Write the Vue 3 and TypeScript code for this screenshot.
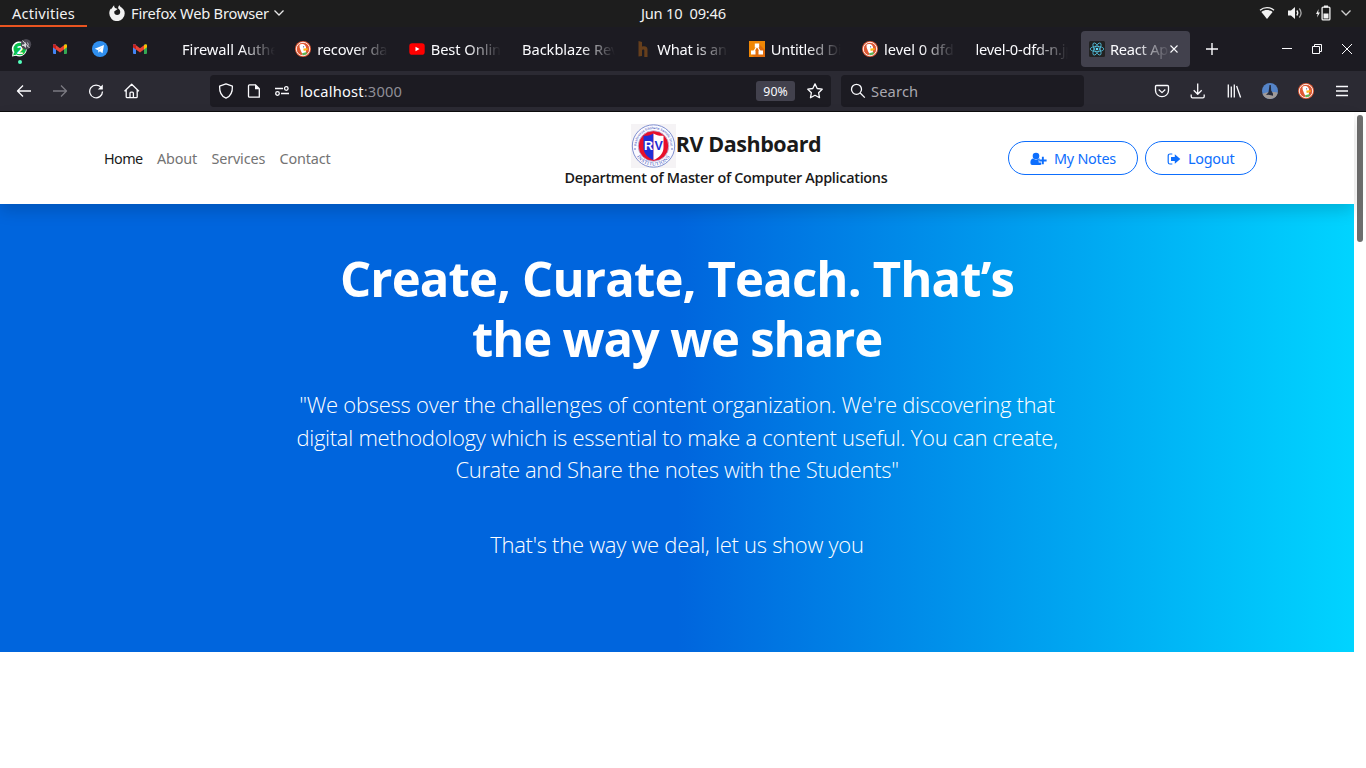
<script setup lang="ts">
interface Tab {
  title: string
  icon: 'duck' | 'youtube' | 'h' | 'draw' | 'react' | null
  tight?: boolean
  active?: boolean
}

const tabs: Tab[] = [
  { title: 'Firewall Authe', icon: null },
  { title: 'recover data', icon: 'duck', tight: true },
  { title: 'Best Online', icon: 'youtube' },
  { title: 'Backblaze Rev', icon: null },
  { title: 'What is and', icon: 'h', tight: true },
  { title: 'Untitled Dia', icon: 'draw', tight: true },
  { title: 'level 0 dfd', icon: 'duck' },
  { title: 'level-0-dfd-n.jp', icon: null, tight: true },
  { title: 'React App', icon: 'react', active: true },
]
const links: string[] = ['Home', 'About', 'Services', 'Contact']
</script>

<template>
  <div class="desktop">
    <svg class="defs" width="0" height="0">
      <symbol id="duck" viewBox="0 0 16 16">
        <circle cx="8" cy="8" r="8" fill="#de5833" />
        <circle cx="8" cy="8" r="6.700" fill="none" stroke="#fff" stroke-width=".9" />
        <path d="M4.500 3.800C6 2.600 8.800 2.700 10.200 4.400c1 1.300 1 2.700.6 4.100L11 13.600l-3.200.5C6.700 11.300 5.300 8.700 4.700 6.700z" fill="#fff" />
        <path d="M8.300 7.400l4.500-.2-.3 1.900-3.800.9z" fill="#fdb515" />
        <path d="M7 12.300l4.800-1.400-.3 2.500-3.600.9z" fill="#5ab552" />
        <circle cx="8.600" cy="5.800" r=".6" fill="#2d4f8e" />
      </symbol>
      <symbol id="gmail" viewBox="0 0 16 12">
        <path d="M1 1.500h3V11H2a1 1 0 0 1-1-1z" fill="#4285f4" />
        <path d="M12 1.500h3V10a1 1 0 0 1-1 1h-2z" fill="#34a853" />
        <path d="M12 2.200l1-.8a1.300 1.300 0 0 1 2 1.200V4.300L12 6.600z" fill="#fbbc04" />
        <path d="M1 4.300V2.600a1.300 1.300 0 0 1 2-1.200L8 5.200l4-3v4.400L8 9.500z" fill="#ea4335" />
        <path d="M1 4.300V2.600a1.300 1.300 0 0 1 2-1.200l1 .8v4.400z" fill="#c5221f" />
      </symbol>
    </svg>

    <header class="topbar">
      <div class="activities">Activities</div>
      <div class="app-menu">
        <svg width="16" height="16" viewBox="0 0 16 16">
          <path d="M5.200.3c-.2 1.200 0 2 .9 2.700 1 .2 1.800.5 2.500 1L7 5.300c-.5.3-1.200.4-1.600 1-.6 2.200.8 3.800 2.700 3.800 2 0 3.300-1.500 3.100-3.400-.1-1.600-1.100-2.500-2-3.100C9 2.300 9.400 1 10.500 0c.1 1.100.7 1.600 1.700 2.300 2 1.400 3.500 3.200 3.500 6A7.700 7.700 0 0 1 .3 8.500C.2 6.200 1 4.400 2.200 3.200l.3 1C3.300 2.600 4 1.200 5.200.3z" fill="#f2f2f2" />
        </svg>
        <span>Firefox Web Browser</span>
        <svg width="12" height="8" viewBox="0 0 12 8"><path d="M1.500 1.500L6 6l4.500-4.500" fill="none" stroke="#e8e8e8" stroke-width="1.300" /></svg>
      </div>
      <div class="clock">Jun 10&nbsp; 09:46</div>
      <div class="status">
        <svg width="16" height="14" viewBox="0 0 16 14">
          <path d="M1 4.200C5 .8 11 .8 15 4.200" fill="none" stroke="#f2f2f2" stroke-width="1.300" />
          <path d="M2.400 6C5.600 3.400 10.400 3.400 13.600 6L8 13z" fill="#f2f2f2" />
        </svg>
        <svg width="16" height="14" viewBox="0 0 16 14">
          <path d="M1 4.500h3L8 1v12L4 9.500H1z" fill="#f2f2f2" />
          <path d="M9.800 4.500q2 2.500 0 5" fill="none" stroke="#f2f2f2" stroke-width="1.300" />
          <path d="M12.300 2.500q3.600 4.500 0 9" fill="none" stroke="#a8a8a8" stroke-width="1.300" />
        </svg>
        <svg width="16" height="16" viewBox="0 0 16 16">
          <path d="M3.600 4L1 9h1.700L2 12.500 5 7.500H3.200z" fill="#f2f2f2" />
          <path d="M9 .5h4v2H9z" fill="#f2f2f2" />
          <rect x="7.100" y="2.100" width="7.800" height="12.800" rx="1" fill="none" stroke="#f2f2f2" stroke-width="1.300" />
          <path d="M8.500 8.500h5v5h-5z" fill="#f2f2f2" />
        </svg>
        <svg width="12" height="8" viewBox="0 0 12 8"><path d="M1.500 1.500L6 6l4.500-4.500" fill="none" stroke="#d0d0d0" stroke-width="1.300" /></svg>
      </div>
    </header>

    <div class="tabstrip">
      <div class="pinned">
        <div class="pin">
          <svg width="24" height="30" viewBox="0 0 24 30">
            <path d="M4 20.500L4.700 16.500A7.500 7.500 0 1 1 8 19.700z" fill="#fff" />
            <circle cx="11.800" cy="13" r="6.300" fill="#09c04a" />
            <path d="M5.200 19.400l.9-3.500 2.600 2.600z" fill="#09c04a" />
            <text x="12" y="17.500" text-anchor="middle" class="wa-count">2</text>
            <circle cx="18" cy="8.200" r="5.200" fill="#4b4953" />
            <path d="M14 8.500h1.800L18 6v6l-2.200-2H14z" fill="#d8d8dc" />
            <path d="M19.500 6.500q1.500 1.700 0 4M14.500 4.500l7 7.500" fill="none" stroke="#d8d8dc" stroke-width=".9" />
            <circle cx="12" cy="26" r="2" fill="#54ffbd" />
          </svg>
        </div>
        <div class="pin"><svg width="16" height="12"><use href="#gmail" /></svg></div>
        <div class="pin">
          <svg width="16" height="16" viewBox="0 0 16 16">
            <circle cx="8" cy="8" r="8" fill="#2f8fef" />
            <path d="M2.800 7.800l9.200-3.700-1.500 8.100-2.700-1.900-1.300 1.400-.4-2.500z" fill="#fff" />
            <path d="M6.200 9l4-3.300-3.300 3.900z" fill="#9cc9f5" />
          </svg>
        </div>
        <div class="pin"><svg width="16" height="12"><use href="#gmail" /></svg></div>
      </div>

      <div v-for="tab in tabs" :key="tab.title" class="tab" :class="{ active: tab.active }">
        <svg v-if="tab.icon === 'duck'" class="fav" width="16" height="16"><use href="#duck" /></svg>
        <svg v-else-if="tab.icon === 'youtube'" class="fav" width="16" height="16" viewBox="0 0 16 16">
          <rect x=".3" y="2.300" width="15.400" height="11.400" rx="2.800" fill="#f00" />
          <path d="M6.500 5.700v4.600L10.500 8z" fill="#fff" />
        </svg>
        <svg v-else-if="tab.icon === 'h'" class="fav" width="16" height="16" viewBox="0 0 16 16">
          <path d="M3.500 0L7 1v4.600c2.800-1 5.500-.2 5.500 2.600V16H9.300V9.500c0-1.600-2.300-1.300-2.300.3V15l-3.500.6z" fill="#663f1c" />
        </svg>
        <svg v-else-if="tab.icon === 'draw'" class="fav" width="16" height="16" viewBox="0 0 16 16">
          <path d="M0 0h16v16H0z" fill="#f08705" />
          <path d="M10 3l6 6v7H5l-3-3 5-5z" fill="#df6c0c" />
          <path d="M8 5L4.500 11M8 5l3.500 6" stroke="#fff" stroke-width="1.300" />
          <path d="M5.800 2.500h4.400v4H5.800zM2 9.500h4.500v4H2zM9.500 9.500H14v4H9.500z" fill="#fff" />
        </svg>
        <svg v-else-if="tab.icon === 'react'" class="fav" width="16" height="16" viewBox="0 0 16 16">
          <rect width="16" height="16" rx="1.500" fill="#222" />
          <g fill="none" stroke="#53c1de" stroke-width=".8">
            <ellipse cx="8" cy="8" rx="6.800" ry="2.600" />
            <ellipse cx="8" cy="8" rx="6.800" ry="2.600" transform="rotate(60 8 8)" />
            <ellipse cx="8" cy="8" rx="6.800" ry="2.600" transform="rotate(120 8 8)" />
          </g>
          <circle cx="8" cy="8" r="1.300" fill="#61dafb" />
        </svg>
        <span class="tab-title" :class="{ tight: tab.tight }">{{ tab.title }}</span>
        <svg v-if="tab.active" class="tab-close" width="8" height="8" viewBox="0 0 8 8"><path d="M.5.5l7 7M7.500.5l-7 7" stroke="#fbfbfe" stroke-width="1.100" /></svg>
      </div>

      <svg class="new-tab" width="12" height="12" viewBox="0 0 12 12"><path d="M6 0v12M0 6h12" stroke="#fbfbfe" stroke-width="1.400" /></svg>
      <div class="win-controls">
        <svg width="12" height="12" viewBox="0 0 12 12"><path d="M1 5.500h10" stroke="#fbfbfe" /></svg>
        <svg width="12" height="12" viewBox="0 0 12 12"><path d="M1.500 3.500h7v7h-7zM3.500 3.500v-2h7v7h-2" fill="none" stroke="#fbfbfe" /></svg>
        <svg width="12" height="12" viewBox="0 0 12 12"><path d="M1 1l10 10M11 1L1 11" stroke="#fbfbfe" /></svg>
      </div>
    </div>

    <div class="navbar">
      <div class="nav-buttons">
        <svg width="16" height="16" viewBox="0 0 16 16"><path d="M7 2.500L1.500 8 7 13.500M1.500 8H15" /></svg>
        <svg class="dim" width="16" height="16" viewBox="0 0 16 16"><path d="M9 2.500L14.500 8 9 13.500M14.500 8H1" /></svg>
        <svg width="16" height="16" viewBox="0 0 16 16"><path d="M13.300 4.700A6.400 6.400 0 1 0 14.500 8.500" /><path class="solid" d="M14.800 1.500v5H9.800z" /></svg>
        <svg width="16" height="16" viewBox="0 0 16 16"><path d="M.5 8.300L7.700 1.300l7.200 7M2.200 7v6.700a1 1 0 0 0 1 1h9a1 1 0 0 0 1-1V7M6 14.500V10.200a1 1 0 0 1 1-1h1.400a1 1 0 0 1 1 1v4.300" /></svg>
      </div>

      <div class="urlbar">
        <svg width="16" height="16" viewBox="0 0 16 16"><path d="M8 .9l6.400 2.300c.2 5.500-1.500 10-6.400 12C3.100 13.200 1.400 8.700 1.600 3.200z" /></svg>
        <svg width="16" height="16" viewBox="0 0 16 16"><path d="M3.500 1.800h5.800l4 4v8.400H3.500a1 1 0 0 1-1-1V2.800a1 1 0 0 1 1-1z" /><path class="solid" d="M9 1.500v4.700h4.500z" /></svg>
        <svg width="16" height="16" viewBox="0 0 16 16"><path d="M1 5.500h8M7 10.500h8" /><circle cx="12.300" cy="5.500" r="1.800" /><circle cx="3.500" cy="10.500" r="1.800" /></svg>
        <span class="address">localhost<span class="port">:3000</span></span>
        <span class="zoom">90%</span>
        <svg width="16" height="16" viewBox="0 0 16 16"><path d="M8 .9l2.200 4.600 5 .7-3.600 3.500.9 5L8 12.300l-4.500 2.400.9-5L.8 6.200l5-.7z" /></svg>
      </div>

      <div class="searchbar">
        <svg width="16" height="16" viewBox="0 0 16 16"><circle cx="6.500" cy="6.300" r="5" /><path d="M10.200 10l4.600 4.600" /></svg>
        <span>Search</span>
      </div>

      <div class="extensions">
        <svg width="16" height="16" viewBox="0 0 16 16"><path d="M2.500 2.500h11a1 1 0 0 1 1 1V7.500a6.500 6.200 0 0 1-13 0V3.500a1 1 0 0 1 1-1zM4.700 6.500L8 9.600l3.300-3.100" /></svg>
        <svg width="16" height="16" viewBox="0 0 16 16"><path d="M7.700.5v10.500M3.700 7.200l4 4 4-4M1.200 11.500v2a1.300 1.300 0 0 0 1.300 1.300h10.400a1.300 1.300 0 0 0 1.300-1.300v-2" /></svg>
        <svg width="16" height="16" viewBox="0 0 16 16"><path d="M2.300 1.500v13M5.300 3.500v11M8.300 1.500v13M10.600 3l4 11.500" /></svg>
        <svg class="pic" width="16" height="16" viewBox="0 0 16 16">
          <circle cx="8" cy="8" r="8" fill="#5584c8" />
          <path d="M.5 10.800l4-1.300 7-.5 4.300.5A8 8 0 0 1 .5 10.800z" fill="#a09a98" />
          <path d="M7.500 2h1.300l.4 5.500 1.800 3.200v2l-4.500-1-2.500.3 2.500-2.700z" fill="#252b3c" />
        </svg>
        <svg class="pic" width="16" height="16"><use href="#duck" /></svg>
        <svg width="16" height="16" viewBox="0 0 16 16"><path d="M2 3.500h12M2 8h12M2 12.500h12" /></svg>
      </div>
    </div>

    <main class="viewport">
      <div class="page">
        <nav class="site-header">
          <ul class="links">
            <li v-for="(link, i) in links" :key="link" :class="{ current: i === 0 }">{{ link }}</li>
          </ul>
          <div class="brand">
            <div class="brand-row">
              <svg width="45" height="44" viewBox="0 0 45 44">
                <path d="M0 0h45v44H0z" fill="#f5f3f5" />
                <circle cx="22.500" cy="22" r="21.200" fill="#fafaff" stroke="#7f8fd0" stroke-width="1" />
                <circle cx="22.500" cy="22" r="15.300" fill="#e8102a" stroke="#b9c2e6" stroke-width=".8" />
                <path d="M22.500 9.500c-3 2-6.500 2.500-10 2.200v11.800c0 6 4.500 10.500 10 12.500z" fill="#1f2fd6" />
                <path d="M22.500 9.500c3 2 6.500 2.500 10 2.200v11.800c0 6-4.500 10.500-10 12.500z" fill="#fff" />
                <text x="17.500" y="26" class="crest left">R</text>
                <text x="27.700" y="26" class="crest right">V</text>
                <path id="arc-top" d="M5.500 22a17 17 0 0 1 34 0" fill="none" />
                <path id="arc-bottom" d="M2.900 22a19.600 19.600 0 0 0 39.200 0" fill="none" />
                <text class="ring-small"><textPath href="#arc-top" startOffset="50%">Rashtreeya Sikshana Samithi Trust</textPath></text>
                <text class="ring-large"><textPath href="#arc-bottom" startOffset="50%">INSTITUTIONS</textPath></text>
                <circle cx="4" cy="25" r=".7" fill="#3648b4" />
                <circle cx="41" cy="25" r=".7" fill="#3648b4" />
              </svg>
              <span class="brand-name">RV Dashboard</span>
            </div>
            <div class="department">Department of Master of Computer Applications</div>
          </div>
          <div class="actions">
            <button class="pill notes" type="button">
              <svg width="17" height="14" viewBox="0 0 17 14">
                <circle cx="6" cy="4" r="3.300" />
                <path d="M.4 10.500C.4 8.200 1.500 6.800 3.200 6.600c1.700 1.400 3.900 1.400 5.600 0 .8.100 1.300.4 1.300.9H8.700v3h2.600v2c-.3.300-.7.500-1.300.5H2.200C1.100 13 .4 12.200.4 10.500z" />
                <path d="M11.900 4.800h1.900v2.800h2.800v1.900h-2.800v2.800h-1.900V9.500H9.200V7.600h2.700z" />
              </svg>
              <span>My Notes</span>
            </button>
            <button class="pill logout" type="button">
              <svg width="14" height="14" viewBox="0 0 14 14">
                <path d="M5.300 2H3A1.800 1.800 0 0 0 1.200 3.800v6.400A1.800 1.800 0 0 0 3 12h2.300" fill="none" stroke="#0d6efd" stroke-width="1.200" />
                <path d="M7.800 2.300L13.300 7l-5.500 4.700V9H4V5h3.800z" />
              </svg>
              <span>Logout</span>
            </button>
          </div>
        </nav>

        <section class="hero">
          <h1>
            <span>Create, Curate, Teach. That’s</span>
            <span class="h-second">the way we share</span>
          </h1>
          <p class="lead">
            <span>"We obsess over the challenges of content organization. We're discovering that</span>
            <span>digital methodology which is essential to make a content useful. You can create,</span>
            <span class="l-third">Curate and Share the notes with the Students"</span>
          </p>
          <p class="closing">That's the way we deal, let us show you</p>
        </section>
      </div>
      <div class="scrollbar"><div class="thumb"></div></div>
    </main>
  </div>
</template>

<style>
body {
  margin: 0;
  background: #fff;
}
</style>

<style scoped>
.desktop {
  width: 1366px;
  height: 768px;
  overflow: hidden;
  display: flex;
  flex-direction: column;
  background: #fff;
  font-family: 'Noto Sans', 'Open Sans', sans-serif;
  font-size: 14.67px;
  line-height: 20px;
  white-space: nowrap;
}
.defs {
  position: absolute;
}
svg {
  display: block;
  flex: none;
}

.topbar {
  height: 27px;
  flex: none;
  display: grid;
  grid-template-columns: 87px 554px 86px 1fr;
  align-items: center;
  background: #1d1d1d;
  color: #f2f2f2;
}
.activities {
  box-sizing: border-box;
  height: 27px;
  padding: 3px 0 0 12px;
  border-bottom: 2px solid #e95420;
  letter-spacing: 0.2px;
}
.app-menu {
  display: flex;
  align-items: center;
  height: 26px;
  margin-bottom: 1px;
  padding-left: 22px;
  letter-spacing: -0.2px;
}
.app-menu span {
  margin: 0 4px 0 6px;
}
.clock {
  margin-bottom: 1px;
  letter-spacing: -0.23px;
}
.status {
  display: flex;
  align-items: center;
  justify-content: flex-end;
  gap: 12px;
  padding-right: 14px;
  margin-bottom: 1px;
}
.status svg:last-child {
  margin-left: -3px;
}

.tabstrip {
  height: 44px;
  flex: none;
  display: flex;
  align-items: center;
  background: #1c1b22;
  color: #fbfbfe;
}
.pinned {
  width: 174.3px;
  flex: none;
  display: flex;
}
.pin {
  width: 40px;
  height: 44px;
  display: flex;
  align-items: center;
  justify-content: center;
}
.pin:first-child {
  align-items: flex-start;
  padding-top: 9px;
  height: 35px;
}
.wa-count {
  font: 700 11px 'Noto Sans', sans-serif;
  fill: #fff;
}
.tab {
  box-sizing: border-box;
  width: 113.35px;
  height: 36px;
  flex: none;
  display: flex;
  align-items: center;
  padding: 0 13px 0 7.7px;
}
.fav {
  margin-right: 6px;
}
.tab-title {
  flex: 1;
  min-width: 0;
  overflow: hidden;
  padding-bottom: 1px;
  letter-spacing: -0.06px;
  mask-image: linear-gradient(to left, transparent, #000 34px);
}
.tab-title.tight {
  letter-spacing: -0.25px;
}
.tab.active {
  width: 109px;
  margin-left: -0.1px;
  padding: 0 12px 0 8px;
  border-radius: 4px;
  background: #42414d;
}
.tab.active .fav {
  margin-right: 5px;
}
.tab.active .tab-title {
  letter-spacing: -0.25px;
}
.new-tab {
  margin-left: 16px;
}
.win-controls {
  display: flex;
  gap: 18px;
  margin-left: auto;
  padding-right: 13px;
}

.navbar {
  box-sizing: border-box;
  height: 41px;
  flex: none;
  display: flex;
  align-items: center;
  background: #2b2a33;
  border-bottom: 1px solid #0c0c0d;
  color: #fbfbfe;
}
.navbar svg:not(.pic) {
  fill: none;
  stroke: #fbfbfe;
  stroke-width: 1.3;
  stroke-linejoin: round;
}
.navbar .solid {
  fill: #fbfbfe;
  stroke: none;
}
.navbar svg.dim:not(.pic) {
  stroke: #7b7a82;
}
.nav-buttons {
  display: flex;
  gap: 20px;
  width: 194px;
  padding-left: 16px;
}
.urlbar,
.searchbar {
  box-sizing: border-box;
  height: 32px;
  display: flex;
  align-items: center;
  background: #1c1b22;
  border-radius: 4px;
}
.urlbar {
  width: 621px;
  padding: 0 8px;
  gap: 12px;
}
.address {
  margin-left: -2px;
  letter-spacing: 0.2px;
  flex: 1;
}
.port {
  color: #8f8e97;
}
.zoom {
  box-sizing: border-box;
  width: 39px;
  height: 20px;
  border-radius: 3px;
  background: #42414d;
  font-size: 12.3px;
  line-height: 21px;
  text-align: center;
}
.searchbar {
  width: 243px;
  margin-left: 10px;
  padding-left: 9px;
  gap: 5px;
  color: #a9a8b0;
  letter-spacing: 0.15px;
}
.extensions {
  display: flex;
  gap: 20px;
  margin-left: auto;
  padding-right: 16px;
}

.viewport {
  flex: 1;
  display: flex;
}
.page {
  width: 1354px;
}
.site-header {
  position: relative;
  box-sizing: border-box;
  height: 92px;
  display: flex;
  padding-left: 104px;
  background: #fff;
  box-shadow: 0 7px 14.4px rgba(0, 0, 0, 0.15);
}
.links {
  display: flex;
  gap: 14.4px;
  width: 460px;
  margin: 0;
  padding: 37px 0 0;
  list-style: none;
  font-size: 14.4px;
  letter-spacing: -0.15px;
  color: #737373;
}
.links .current {
  color: #1a1a1a;
  letter-spacing: -0.6px;
}
.brand {
  width: 324px;
  padding-top: 12px;
  font-family: 'Open Sans', 'Noto Sans', sans-serif;
  font-weight: 600;
  color: #1a1a1a;
}
.brand-row {
  display: flex;
  justify-content: center;
  height: 44px;
}
.brand-name {
  font-size: 21.5px;
  font-weight: 700;
  line-height: 39px;
  letter-spacing: -0.45px;
}
.department {
  font-size: 14.4px;
  line-height: 20px;
  letter-spacing: -0.29px;
  text-align: center;
}
.crest {
  font: 700 12.5px 'Liberation Sans', sans-serif;
  text-anchor: middle;
}
.crest.left {
  fill: #fff;
}
.crest.right {
  fill: #1f2fd6;
}
.ring-small {
  font: 400 3.4px 'Liberation Sans', sans-serif;
  fill: #3648b4;
  text-anchor: middle;
}
.ring-large {
  font: 400 5px 'Liberation Serif', serif;
  letter-spacing: 0.4px;
  fill: #3648b4;
  text-anchor: middle;
}
.actions {
  display: flex;
  gap: 7px;
  margin-left: 120px;
  padding-top: 29px;
}
.pill {
  box-sizing: border-box;
  height: 34px;
  display: flex;
  align-items: center;
  gap: 7px;
  padding: 1px 0 0 21px;
  border: 1px solid #0d6efd;
  border-radius: 18px;
  background: #fff;
  color: #0d6efd;
  font: 400 14.4px/20px 'Noto Sans', sans-serif;
  letter-spacing: -0.25px;
}
.pill svg {
  fill: #0d6efd;
}
.notes {
  width: 130px;
}
.logout {
  width: 112px;
}

.hero {
  box-sizing: border-box;
  height: 448px;
  padding-top: 44px;
  background: linear-gradient(90deg, #0065dd 0%, #0065dd 50%, #00d4ff 100%);
  color: #fff;
  text-align: center;
  font-family: 'Open Sans', 'Noto Sans', sans-serif;
}
h1 {
  margin: 0;
  font-size: 49px;
  font-weight: 700;
  line-height: 60px;
  letter-spacing: -0.84px;
}
.h-second {
  letter-spacing: -1.15px;
}
h1 span,
.lead span {
  display: block;
}
.lead,
.closing {
  margin: 20px 0 0;
  font-size: 22px;
  font-weight: 300;
  line-height: 32.5px;
  letter-spacing: -0.27px;
}
.l-third {
  letter-spacing: -0.35px;
}
.closing {
  margin-top: 42.5px;
}
.scrollbar {
  width: 12px;
  background: #fff;
}
.thumb {
  width: 6px;
  height: 127px;
  margin: 3px 0 0 3px;
  border-radius: 3px;
  background: #6e6e6e;
}
</style>
